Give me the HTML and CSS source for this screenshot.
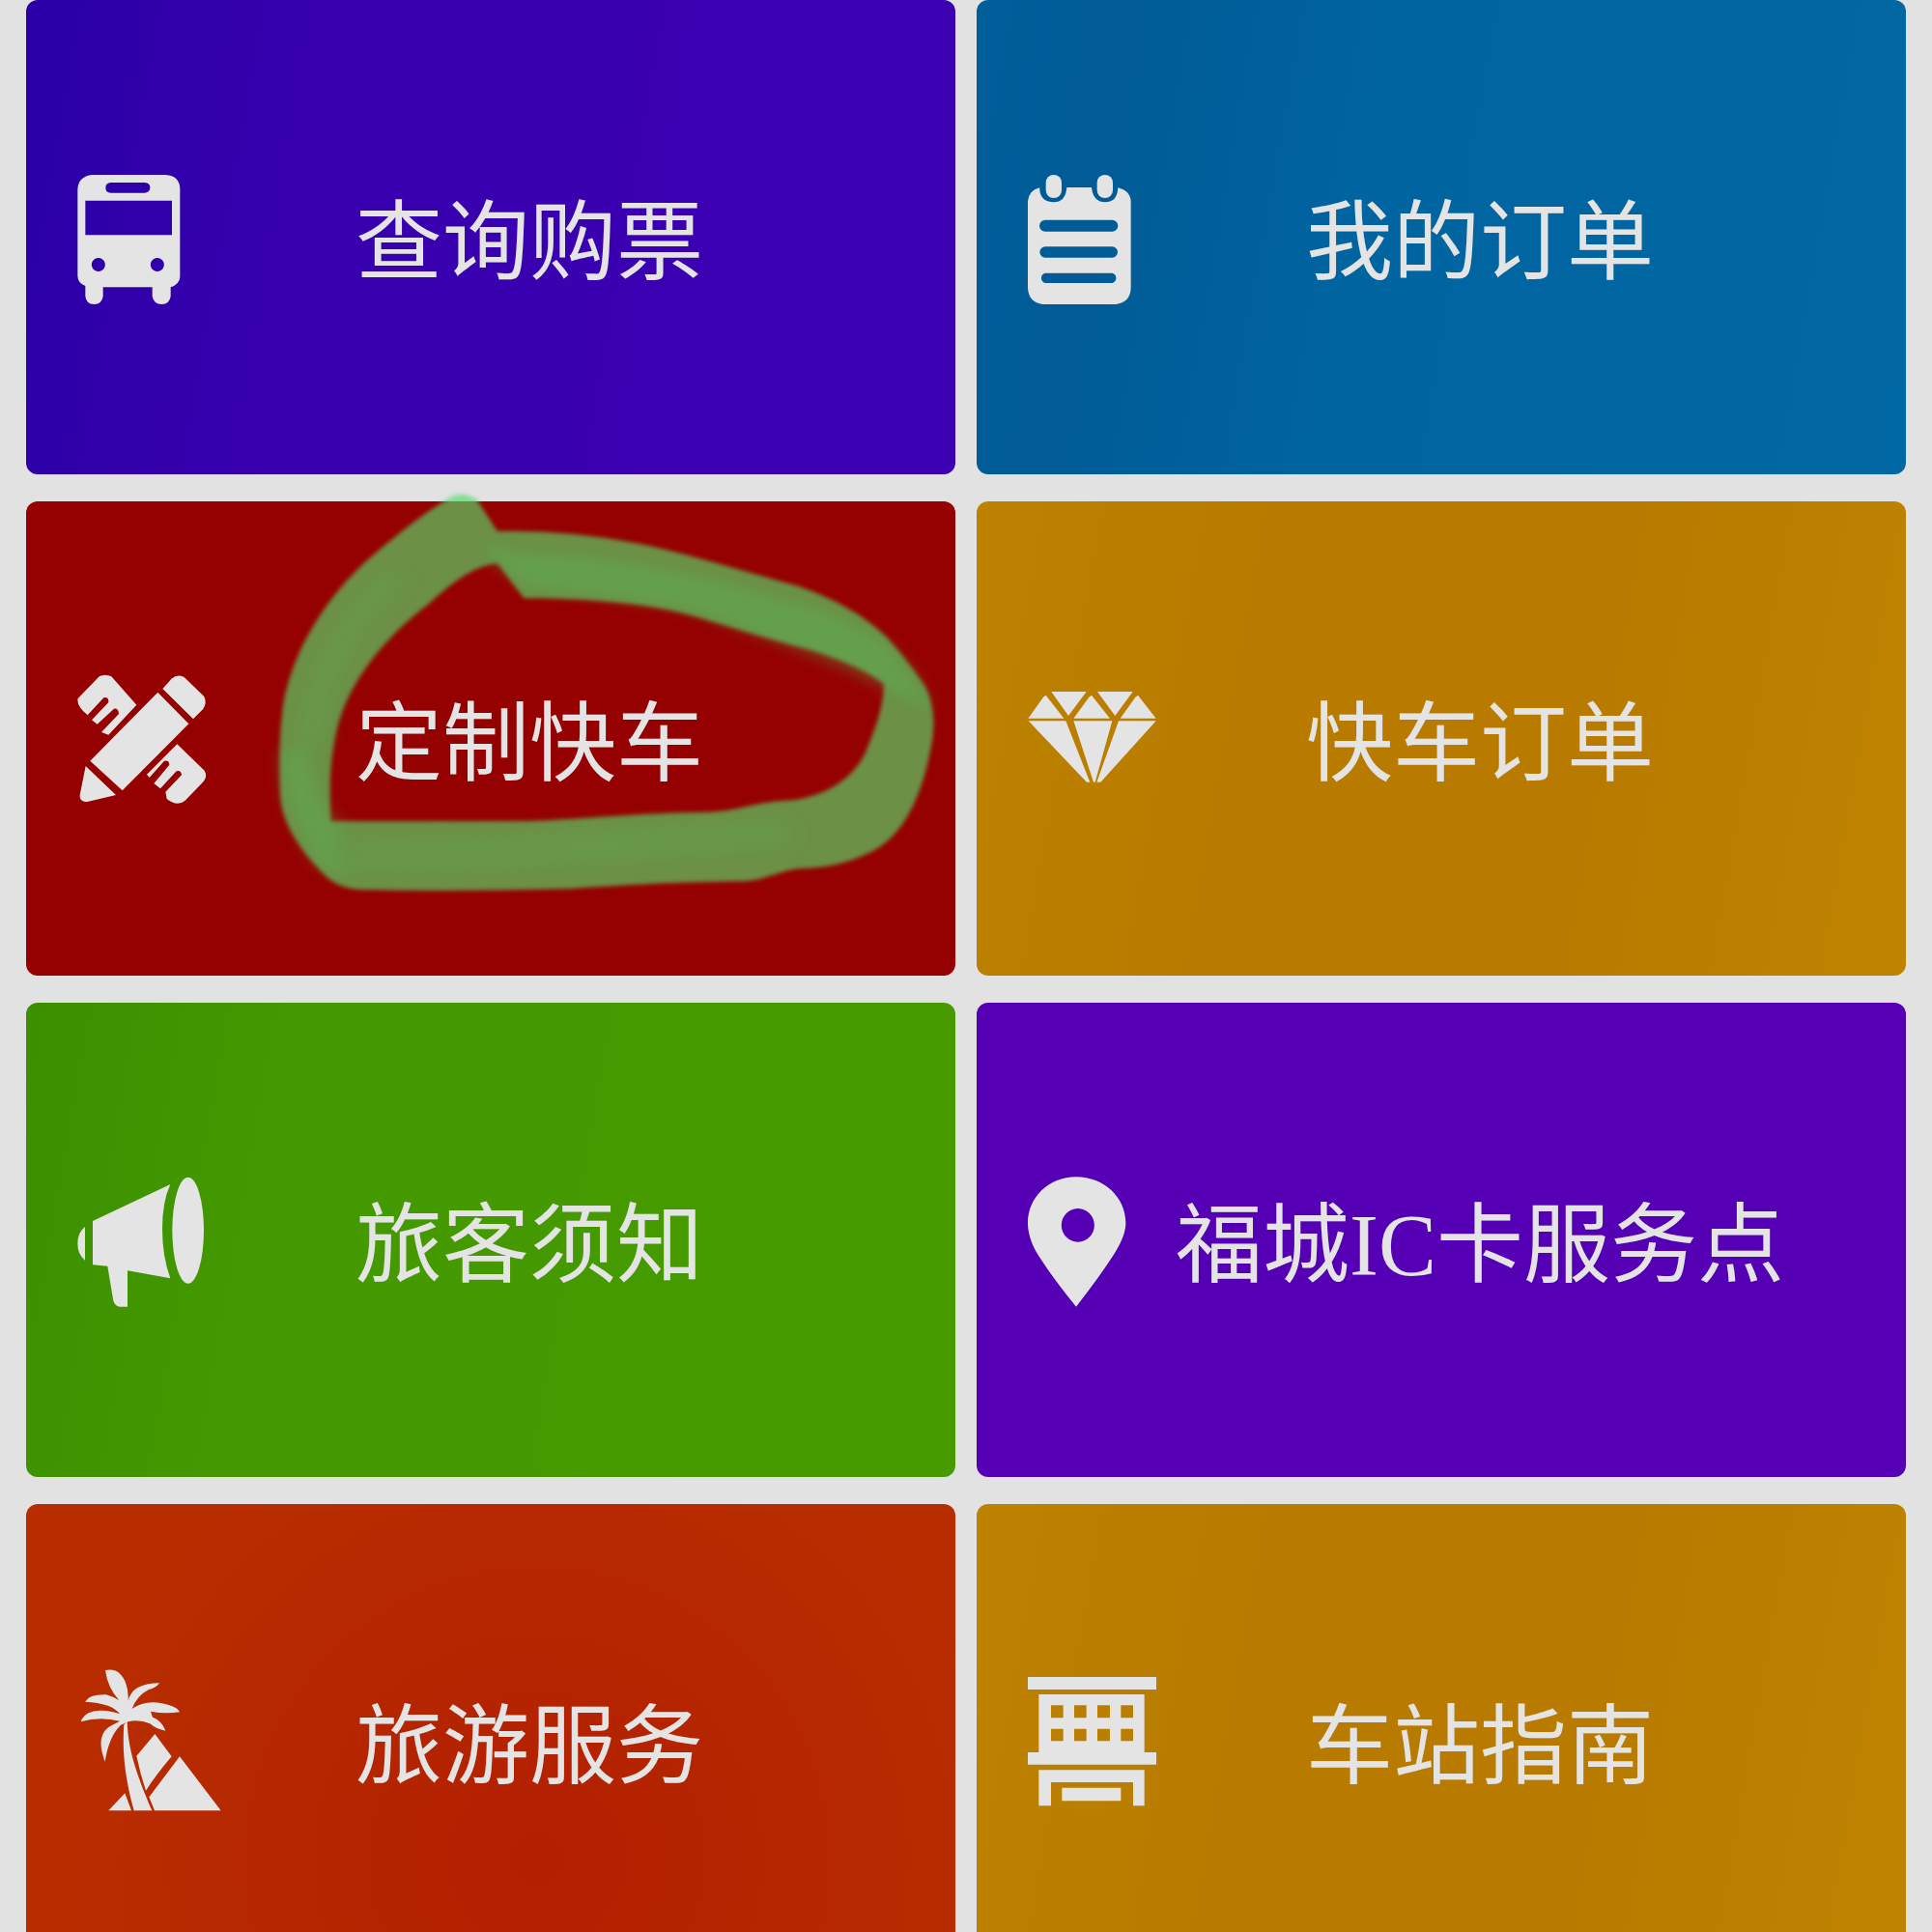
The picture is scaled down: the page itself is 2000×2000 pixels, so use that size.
FILE: index.html
```html
<!DOCTYPE html>
<html lang="zh-CN">
  <head>
    <meta charset="UTF-8" />
    <meta name="viewport" content="width=device-width, initial-scale=1.0" />
    <title>汽车票服务</title>
    <link rel="stylesheet" href="styles.css">
  </head>
  <body>
    <nav class="menu">
      <a class="card indigo" href="#">
        <svg class="icon" viewBox="57 18 456 480" aria-hidden="true">
          <path fill-rule="evenodd" d="M106 63H334Q379 66 379 108V380Q378 402 350 412V440Q346 465 322 465Q298 465 293 440V412H140V440Q136 465 112 465Q88 465 85 440V408Q61 400 61 376V108Q63 68 106 63ZM164 87Q148 88 148 103Q148 119 164 119H270Q286 118 286 103Q286 88 270 87ZM85 143V250H354V143ZM125 321a21 21 0 1 0 1 0ZM308 321a21 21 0 1 0 1 0Z" />
        </svg>
        <span class="name">查询购票</span>
      </a>
      <a class="card blue" href="#">
        <svg class="icon" viewBox="69 18 456 480" aria-hidden="true">
          <path fill-rule="evenodd" d="M109 103V112C112 138 130 148 152 148C176 148 190 134 193 102H270C273 134 290 148 312 148C334 148 350 138 352 103Q390 112 392 145V415Q390 460 345 465H118Q75 460 72 415V145Q76 110 109 103ZM126 203a17 17 0 0 0 0 36H334a17 17 0 0 0 0 -36ZM126 286a17 17 0 0 0 0 34H334a17 17 0 0 0 0 -34ZM126 368a16 16 0 0 0 0 31H334a16 16 0 0 0 0 -31Z" />
          <rect x="128" y="63" width="49" height="72" rx="24" />
          <rect x="287" y="63" width="49" height="72" rx="24" />
        </svg>
        <span class="name">我的订单</span>
      </a>
      <a class="card red" href="#">
        <svg class="icon" viewBox="57 14 456 480" aria-hidden="true">
          <path d="M128 60Q146 50 166 60L244 148L157 241L135 233L189 176Q188 158 174 160L122 208L105 195L157 140Q158 122 142 126L92 180Q56 150 62 128Z" />
          <path d="M370 270L455 352Q466 370 450 388L395 445Q370 466 338 440L334 418L384 366Q382 350 368 354L318 408L298 392L346 334Q345 318 330 322L284 374L276 364Z" />
          <path d="M310 109L406 207L200 414L100 322Z" />
          <path d="M325 98L354 66Q370 52 392 62L454 122Q464 142 450 162L420 192Z" />
          <path d="M86 338L180 428L88 450Q66 448 68 428Z" />
        </svg>
        <span class="name">定制快车</span>
        <!-- 手绘圈注 -->
        <svg class="mark" viewBox="0 0 1568 1350" preserveAspectRatio="none" aria-hidden="true">
          <path class="mark-base" d="M440 72C360 140 300 215 250 275C140 420 85 590 70 720C58 850 62 980 65 1020C75 1110 120 1190 160 1245Q185 1285 235 1293Q460 1300 700 1290C850 1275 980 1268 1085 1267C1130 1262 1150 1238 1200 1228Q1290 1225 1350 1182C1440 1130 1475 970 1490 860Q1508 750 1480 665C1450 600 1420 550 1395 510C1330 420 1250 375 1200 350C1080 305 950 245 850 218Q690 175 540 180L495 82Q465 55 440 72ZM540 280L598 388C750 388 900 410 980 448C1080 490 1160 525 1230 550Q1340 600 1388 655C1386 730 1370 790 1345 875Q1300 990 1190 1015C1100 1020 1070 1050 1000 1052C830 1055 720 1075 600 1080H175C170 960 175 850 195 760C225 630 300 500 390 405Q480 285 540 280Z" />
          <path class="mark-deep" d="M530 200L570 250C740 245 980 310 1130 380Q1300 430 1390 530Q1470 640 1485 740L1395 670C1280 580 1120 510 980 430Q760 370 610 360L520 260Z" />
          <path class="mark-deep" d="M70 850Q65 1040 150 1220L210 1270L190 1080L165 1050Q130 960 120 850Z" />
          <path class="mark-soft" d="M210 1130C500 1150 800 1080 1180 1080V1160C900 1200 600 1240 220 1240ZM100 850C100 660 160 480 290 300L340 330C220 500 170 680 160 850Z" />
        </svg>
      </a>
      <a class="card gold" href="#">
        <svg class="icon" viewBox="69 14 456 480" aria-hidden="true">
          <path d="M145 107H254L198 182ZM288 107H398L343 182ZM128 118L184 190H73L120 124ZM270 118L327 190H214L262 124ZM414 118L470 190H359L406 124ZM74 198H190L265 388H255ZM214 198H334L281 388H276ZM354 198H470L298 388H286Z" />
        </svg>
        <span class="name">快车订单</span>
      </a>
      <a class="card green" href="#">
        <svg class="icon" viewBox="57 40 456 480" aria-hidden="true">
          <path d="M84 238V342Q61 325 61 290Q61 255 84 238ZM108 220L349 106Q324 160 324 245Q324 330 349 398L216 374V486H190Q174 482 171 462L154 360L108 356Z" />
          <ellipse cx="404" cy="249" rx="49" ry="165" />
        </svg>
        <span class="name">旅客须知</span>
      </a>
      <a class="card violet" href="#">
        <svg class="icon" viewBox="69 40 456 480" aria-hidden="true">
          <path fill-rule="evenodd" d="M222 83C310 83 376 148 376 226C376 256 362 288 338 326Q290 400 222 486Q155 405 108 332C84 294 72 260 72 226C72 148 136 83 222 83ZM227 181a51 52 0 1 0 1 0Z" />
        </svg>
        <span class="name">福城IC卡服务点</span>
      </a>
      <a class="card orange" href="#">
        <svg class="icon" viewBox="57 38 456 480" aria-hidden="true">
          <path d="M205 225L215 215C218 300 240 370 292 492H236C205 380 200 300 205 225Z" />
          <path d="M147 56Q190 46 210 94Q220 120 218 152Q230 96 315 96Q304 112 282 116Q244 136 230 176Q280 140 355 168Q372 174 378 186Q330 192 288 184L294 202Q322 212 334 244Q306 240 286 222Q252 208 218 216L195 226Q158 262 146 340Q116 262 158 232L192 214Q130 198 71 216Q82 182 130 181Q160 180 192 192Q168 158 84 154Q98 130 150 132Q172 138 190 150Q154 110 147 56Z" />
          <path d="M301 254L353 324Q305 380 273 430Q256 380 244 322ZM378 324L506 492H300L283 450ZM157 492L208 438L228 492Z" />
        </svg>
        <span class="name">旅游服务</span>
      </a>
      <a class="card gold" href="#">
        <svg class="icon" viewBox="69 38 456 480" aria-hidden="true">
          <path fill-rule="evenodd" d="M72 77H471V116H72ZM106 131H434V311H471V349H72V311H106ZM144 165V204H182V165ZM216 165V204H254V165ZM288 165V204H327V165ZM361 165V204H399V165ZM144 238V276H182V238ZM216 238V276H254V238ZM288 238V276H327V238ZM361 238V276H399V238ZM106 366H434V477H399V404H144V477H106ZM178 421H361V462H178Z" />
        </svg>
        <span class="name">车站指南</span>
      </a>
    </nav>
  </body>
</html>
```

FILE: styles.css
```css
* {
  margin: 0;
  padding: 0;
  box-sizing: border-box;
}
body {
  height: 100vh;
  overflow: hidden;
  background-color: #e2e2e2;
  font-family: "Liberation Serif", "Noto Sans CJK SC", sans-serif;
}
.menu {
  display: grid;
  grid-template-columns: repeat(2, minmax(0, 1fr));
  grid-auto-rows: 491px;
  gap: 28px 22px;
  padding: 0 27px;
}
.card {
  position: relative;
  display: flex;
  align-items: center;
  padding: 0 124px 0 52px;
  border-radius: 12px;
  color: #e4e4e4;
  text-decoration: none;
}
.icon {
  flex: none;
  width: 152px;
  height: 160px;
  fill: #e4e4e4;
}
.name {
  flex: 1;
  display: flex;
  justify-content: center;
  min-width: 0;
  padding-top: 12px;
  font-size: 90px;
  line-height: 120px;
  white-space: nowrap;
}

.indigo {
  background: linear-gradient(100deg, #2a00a6, #3900b0 35%, #3b00b2);
}
.blue {
  background: linear-gradient(100deg, #005e9a, #005b96 15%, #0064a0 40%, #0068a4);
}
.red {
  background: #950000;
}
.gold {
  background: linear-gradient(100deg, #bd8200, #b87b00 30%, #b87b00 65%, #be8400);
}
.green {
  background: linear-gradient(100deg, #3c9000, #459900 30%, #469b00);
}
.violet {
  background: #5500b5;
}
.orange {
  background: radial-gradient(circle at 55% 75%, #b31f00, #b82d00 75%);
}

/* 圈注盖在卡片上面 */
.mark {
  position: absolute;
  left: 233px;
  top: -29px;
  width: 740px;
  height: 450px;
  overflow: visible;
  pointer-events: none;
  filter: blur(2px);
}
.mark-base {
  fill: rgba(87, 218, 107, 0.66);
  fill-rule: evenodd;
}
.mark-deep {
  fill: rgba(87, 190, 90, 0.35);
  filter: blur(20px);
}
.mark-soft {
  fill: rgba(87, 190, 90, 0.18);
  filter: blur(24px);
}
```
